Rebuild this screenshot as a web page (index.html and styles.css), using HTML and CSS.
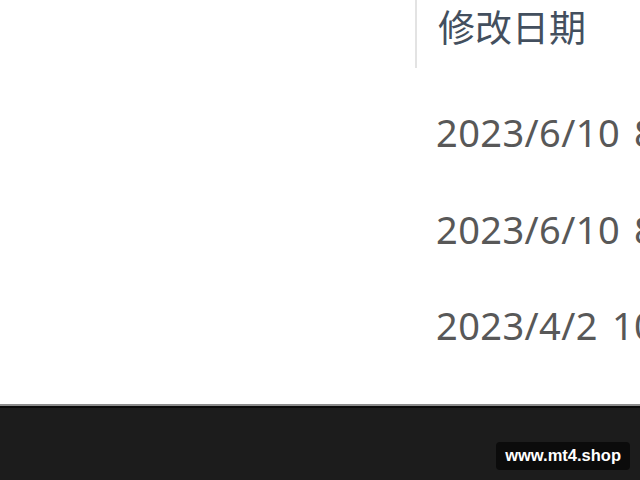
FILE: index.html
```html
<!DOCTYPE html>
<html lang="zh-CN">
<head>
    <meta charset="UTF-8">
    <title>修改日期</title>
    <link rel="stylesheet" href="styles.css">
</head>
<body>
    <div class="file-list">
        <div class="list-header">
            <div class="col-name"></div>
            <div class="col-date">修改日期</div>
        </div>
        <div class="list-rows">
            <div class="row">
                <div class="col-name"></div>
                <div class="col-date">2023/6/10<span class="time">8:32</span></div>
            </div>
            <div class="row">
                <div class="col-name"></div>
                <div class="col-date">2023/6/10<span class="time">8:32</span></div>
            </div>
            <div class="row">
                <div class="col-name"></div>
                <div class="col-date">2023/4/2<span class="time">10:15</span></div>
            </div>
        </div>
    </div>

    <div class="taskbar">
        <span class="watermark">www.mt4.shop</span>
    </div>
</body>
</html>
```

FILE: styles.css
```css
:root {
    --header-text: #434f5e;
    --row-text: #585858;
    --divider: #e3e3e3;
    --taskbar: #1c1c1c;
}

html, body {
    margin: 0;
    height: 100%;
    overflow: hidden;
}

body {
    font-family: "Noto Sans", "Noto Sans CJK SC", sans-serif;
    background: var(--taskbar);
    display: flex;
    flex-direction: column;
    width: 640px;
    height: 480px;
}

.file-list {
    background: white;
    height: 404px;
    flex-shrink: 0;
    white-space: nowrap;
    overflow: hidden;
}

.list-header,
.row {
    display: flex;
    align-items: center;
}

.col-name {
    width: 415px;
    flex-shrink: 0;
    align-self: stretch;
}

.col-date {
    padding-left: 21px;
    font-size: 38px;
    letter-spacing: 0.4px;
}

.list-header {
    height: 68px;
}

.list-header .col-name {
    border-right: 2px solid var(--divider);
}

.list-header .col-date {
    color: var(--header-text);
    font-family: "Noto Sans CJK SC", sans-serif;
    font-size: 37px;
    letter-spacing: 0;
    margin-bottom: 16px;
}

.list-rows {
    padding-top: 16px;
}

.row {
    height: 96.5px;
}

.row .col-date {
    color: var(--row-text);
}

.time {
    margin-left: 14px;
}

.taskbar {
    flex: 1;
    border-top: 2px solid #8c8c8c;
    box-shadow: inset 0 2px 0 #0a0a0a;
    display: flex;
    align-items: flex-end;
    justify-content: flex-end;
    padding: 0 10px 10px 0;
}

.watermark {
    background: #0b0b0b;
    color: white;
    font-family: "Liberation Sans", Arial, sans-serif;
    font-weight: bold;
    font-size: 16.5px;
    padding: 4px 9px 5px 9px;
    border-radius: 4px;
}
```
